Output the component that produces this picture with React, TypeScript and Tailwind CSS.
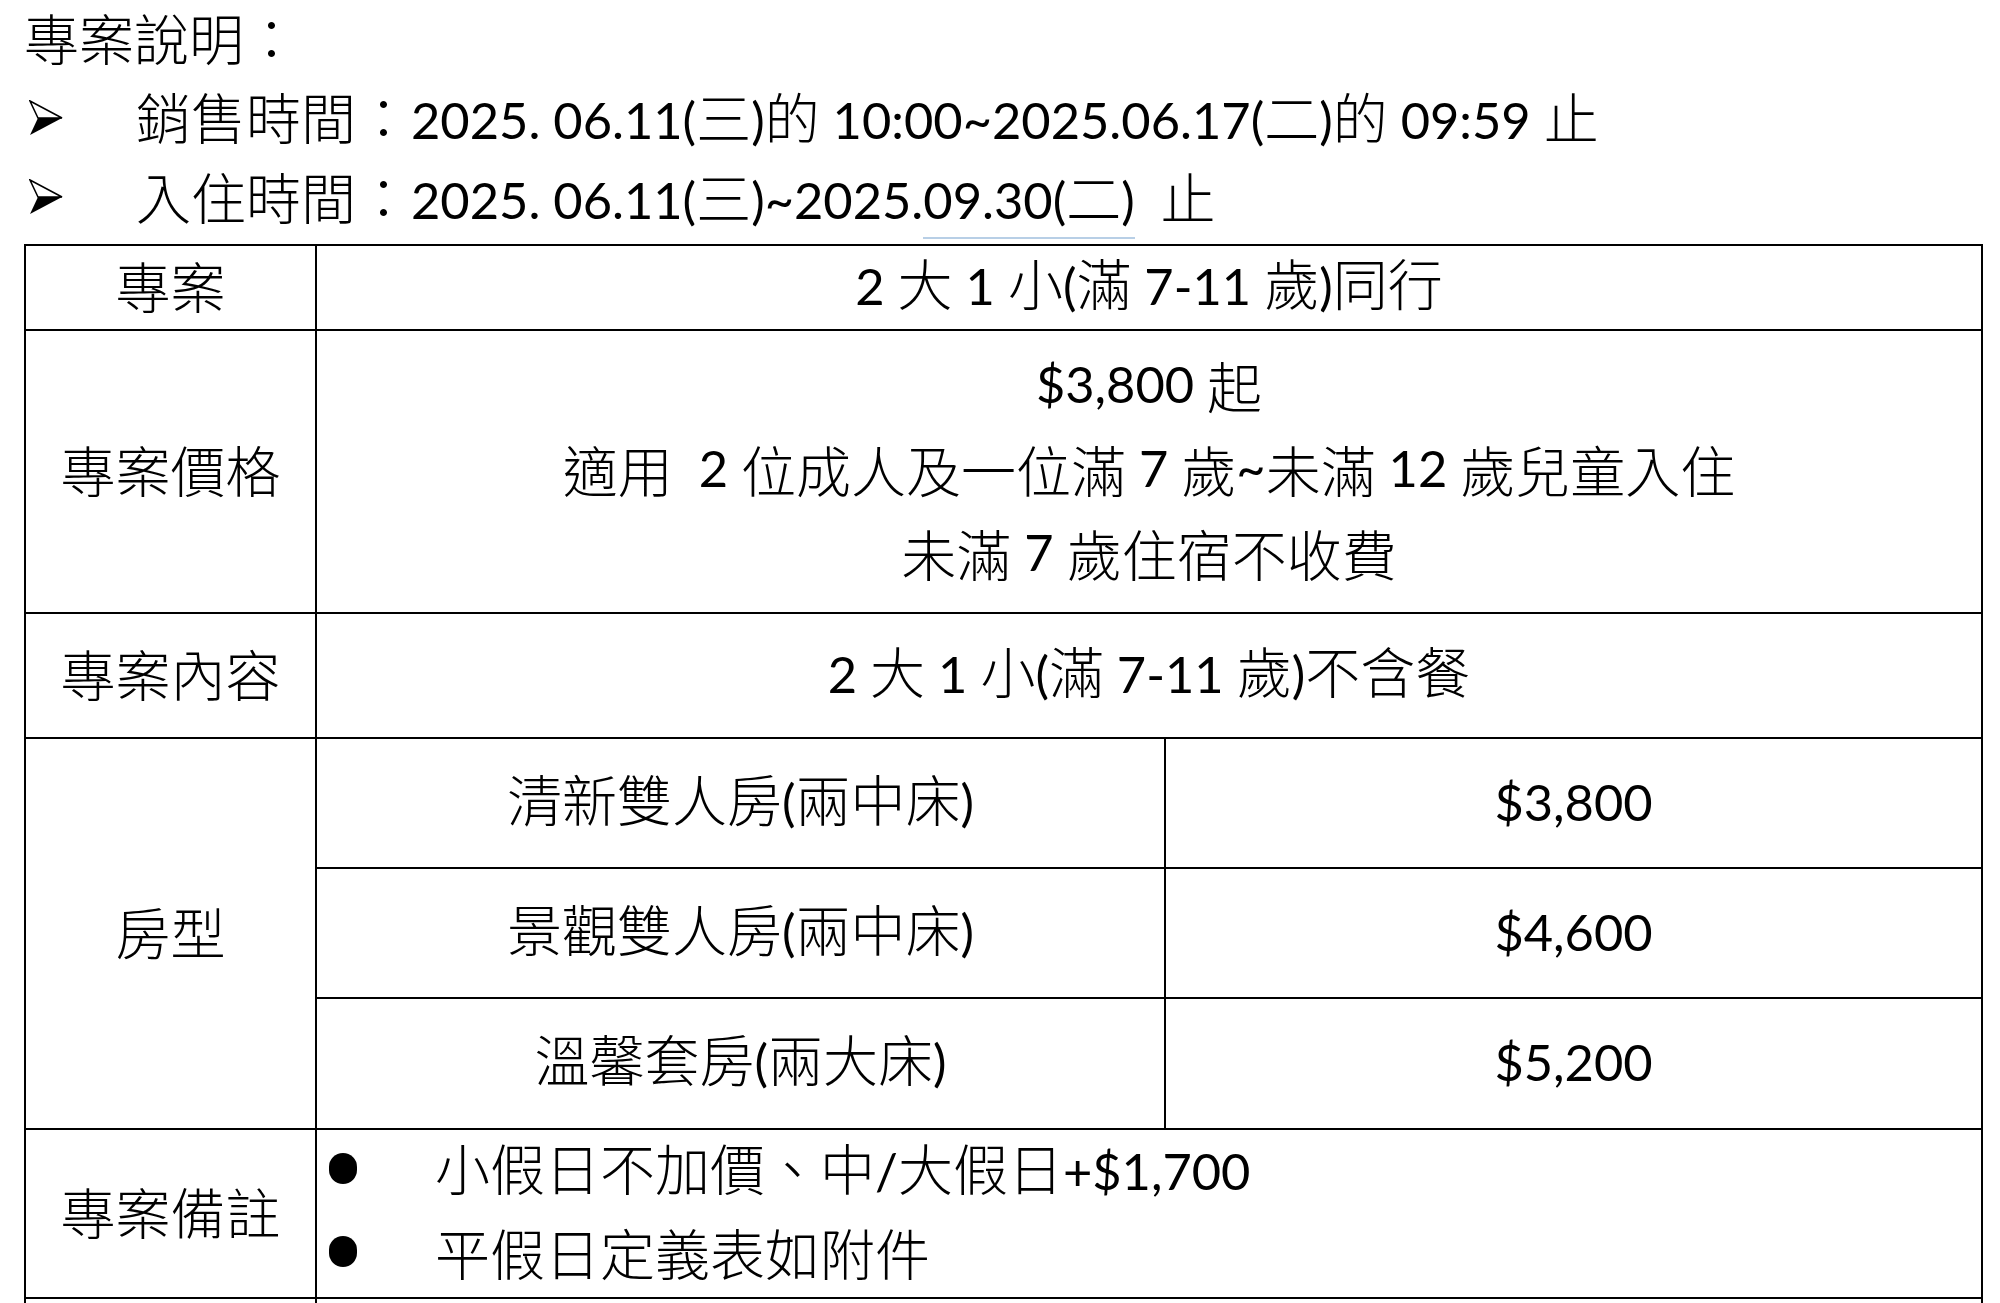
import React from 'react';

// 中文用思源黑體，英數字改用較窄的 Lato
const T = ({ children }: { children: string }) => {
  const parts = children.split(/([\u0000-\u024f]+)/).filter(p => p !== '');
  return (
    <>
      {parts.map((p, i) =>
        /^[\u0000-\u024f]+$/.test(p) ? (
          <span key={i} className="font-['Lato'] font-normal text-[0.92em]">{p}</span>
        ) : (
          <span key={i}>{p}</span>
        )
      )}
    </>
  );
};

const Arrow = () => (
  <svg width="34" height="36" viewBox="0 0 34 36" className="shrink-0">
    <polygon points="1,1 33,18 9,18" fill="white" stroke="black" strokeWidth="1.5" strokeLinejoin="miter" />
    <polygon points="9,18 33,18 1,35" fill="black" />
  </svg>
);

const Bullet = () => <div className="h-[31px] w-[28px] shrink-0 rounded-full bg-black" />;

const cell = 'border-2 border-black text-center align-middle p-0 pb-[8px] leading-[60px]';
const line = 'flex h-[84px] items-center justify-center leading-[84px]';

export default function App() {
  return (
    <div className="min-h-screen bg-white pl-[24px] text-[55px] text-black font-light font-['Noto_Sans_CJK_TC',sans-serif] whitespace-pre">
      <div className="flex h-[72px] items-center leading-[72px]">專案說明：</div>

      <div className="mt-[6px] flex h-[79px] items-center leading-[79px]">
        <div className="w-[112px] pl-[5px]"><Arrow /></div>
        <div><T>{'銷售時間：2025. 06.11(三)的 10:00~2025.06.17(二)的 09:59 止'}</T></div>
      </div>

      <div className="flex h-[80px] items-center leading-[80px]">
        <div className="w-[112px] pl-[5px]"><Arrow /></div>
        <div>
          <T>{'入住時間：2025. 06.11(三)~2025.'}</T>
          <span className="border-b-2 border-[#b8cfe6] pb-[2px]"><T>{'09.30(二)'}</T></span>
          <T>{'  止'}</T>
        </div>
      </div>

      <table className="mt-[7px] w-[1957px] table-fixed border-collapse">
        <colgroup>
          <col className="w-[291px]" />
          <col className="w-[849px]" />
          <col className="w-[817px]" />
        </colgroup>
        <tbody>
          <tr className="h-[85px]">
            <td className={cell}>專案</td>
            <td className={cell} colSpan={2}><T>{'2 大 1 小(滿 7-11 歲)同行'}</T></td>
          </tr>
          <tr className="h-[283px]">
            <td className={cell}>專案價格</td>
            <td className={cell} colSpan={2}>
              <div className={line}><T>{'$3,800 起'}</T></div>
              <div className={line}><T>{'適用  2 位成人及一位滿 7 歲~未滿 12 歲兒童入住'}</T></div>
              <div className={line}><T>{'未滿 7 歲住宿不收費'}</T></div>
            </td>
          </tr>
          <tr className="h-[125px]">
            <td className={cell}>專案內容</td>
            <td className={cell} colSpan={2}><T>{'2 大 1 小(滿 7-11 歲)不含餐'}</T></td>
          </tr>
          <tr className="h-[130px]">
            <td className={cell} rowSpan={3}>房型</td>
            <td className={cell}><T>{'清新雙人房(兩中床)'}</T></td>
            <td className={cell}><T>{'$3,800'}</T></td>
          </tr>
          <tr className="h-[130px]">
            <td className={cell}><T>{'景觀雙人房(兩中床)'}</T></td>
            <td className={cell}><T>{'$4,600'}</T></td>
          </tr>
          <tr className="h-[131px]">
            <td className={cell}><T>{'溫馨套房(兩大床)'}</T></td>
            <td className={cell}><T>{'$5,200'}</T></td>
          </tr>
          <tr className="h-[169px]">
            <td className={cell}>專案備註</td>
            <td className="border-2 border-black p-0 text-left align-top" colSpan={2}>
              <div className="flex h-[76px] items-center leading-[76px]">
                <div className="w-[118px] pl-[12px]"><Bullet /></div>
                <div><T>{'小假日不加價、中/大假日+$1,700'}</T></div>
              </div>
              <div className="flex h-[90px] items-center leading-[90px]">
                <div className="w-[118px] pl-[12px]"><Bullet /></div>
                <div>平假日定義表如附件</div>
              </div>
            </td>
          </tr>
          <tr className="h-[80px]">
            <td className="border-2 border-black p-0"></td>
            <td className="border-2 border-black p-0" colSpan={2}></td>
          </tr>
        </tbody>
      </table>
    </div>
  );
}
